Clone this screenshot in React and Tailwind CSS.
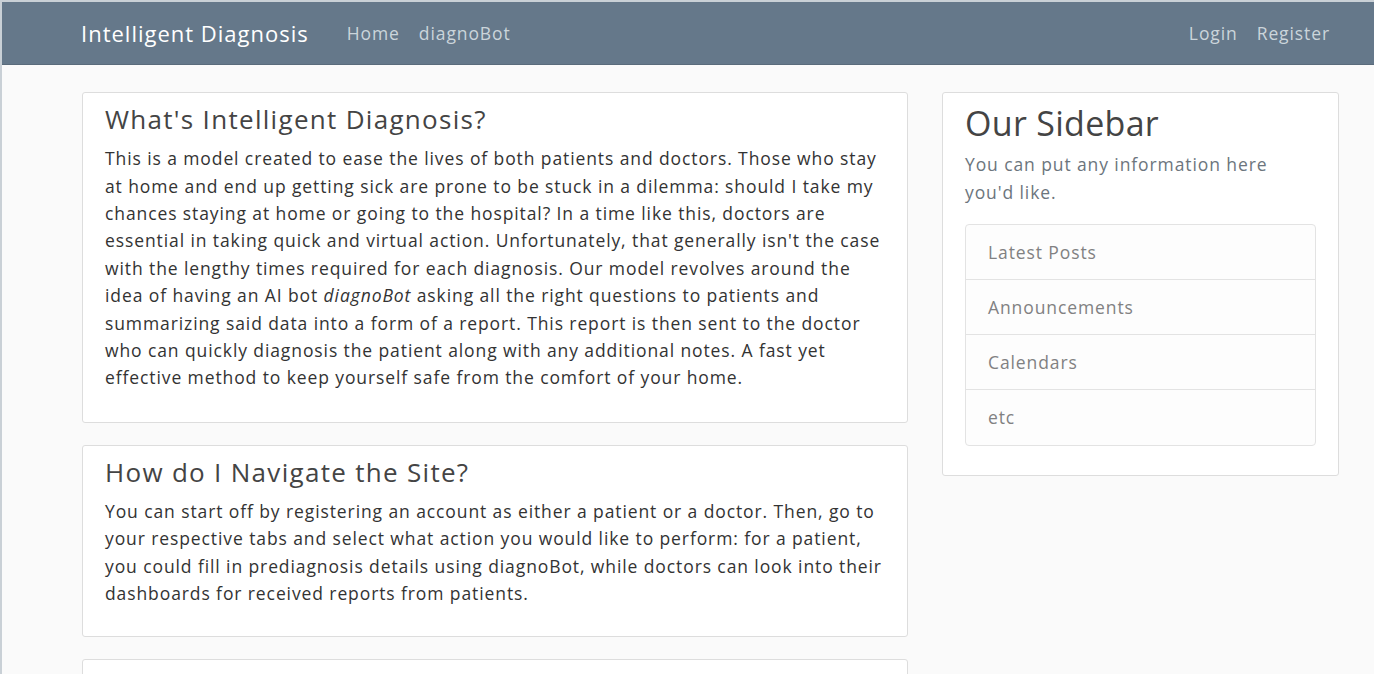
import React from "react";

const sidebarLinks = ["Latest Posts", "Announcements", "Calendars", "etc"];

const App = () => {
  return (
    <div
      className="min-h-screen bg-[#fafafa] text-[#333] border-t-2 border-l-2 border-[#c9d0d6]"
      style={{ fontFamily: '"Open Sans", "Liberation Sans", sans-serif' }}
    >
      {/* Navbar */}
      <header className="h-[63px] bg-[#65788a] border-b border-[#5a6b7b]">
        <nav className="flex items-center h-full pl-[79px] pr-[44px]">
          <a className="text-[22px] text-white mr-[38px] leading-none tracking-[1px]">Intelligent Diagnosis</a>
          <div className="flex gap-[19px] text-[17.5px] text-[#cbd5db] tracking-[0.9px]">
            <a>Home</a>
            <a>diagnoBot</a>
          </div>
          <div className="ml-auto flex gap-[19px] text-[17.5px] text-[#cbd5db] tracking-[0.9px]">
            <a>Login</a>
            <a>Register</a>
          </div>
        </nav>
      </header>

      <main className="flex gap-[34px] pl-[80px] pt-[27px]">
        {/* Left column */}
        <div className="w-[826px] flex flex-col gap-[22px]">
          <article className="bg-white border border-[#dddddd] rounded-[3px] px-[22px] pt-[11px] pb-[30px]">
            <h2 className="text-[26px] text-[#444] leading-[1.2] mb-[10px] tracking-[1.3px]">What's Intelligent Diagnosis?</h2>
            <p className="text-[17.5px] leading-[27.4px] tracking-[0.9px]">
              This is a model created to ease the lives of both patients and doctors. Those who stay<br />
              at home and end up getting sick are prone to be stuck in a dilemma: should I take my<br />
              chances staying at home or going to the hospital? In a time like this, doctors are<br />
              essential in taking quick and virtual action. Unfortunately, that generally isn't the case<br />
              with the lengthy times required for each diagnosis. Our model revolves around the<br />
              idea of having an AI bot <em>diagnoBot</em> asking all the right questions to patients and<br />
              summarizing said data into a form of a report. This report is then sent to the doctor<br />
              who can quickly diagnosis the patient along with any additional notes. A fast yet<br />
              effective method to keep yourself safe from the comfort of your home.
            </p>
          </article>

          <article className="bg-white border border-[#dddddd] rounded-[3px] px-[22px] pt-[11px] pb-[28px]">
            <h2 className="text-[26px] text-[#444] leading-[1.2] mb-[10px] tracking-[1.3px]">How do I Navigate the Site?</h2>
            <p className="text-[17.5px] leading-[27.4px] tracking-[0.9px]">
              You can start off by registering an account as either a patient or a doctor. Then, go to<br />
              your respective tabs and select what action you would like to perform: for a patient,<br />
              you could fill in prediagnosis details using diagnoBot, while doctors can look into their<br />
              dashboards for received reports from patients.
            </p>
          </article>

          <article className="bg-white border border-[#dddddd] rounded-[3px] h-[120px]" />
        </div>

        {/* Sidebar */}
        <aside className="w-[397px] self-start bg-white border border-[#dddddd] rounded-[3px] px-[22px] pt-[10px] pb-[29px]">
          <h3 className="text-[34px] text-[#444] leading-[1.2] mb-[6px] tracking-[0.3px]">Our Sidebar</h3>
          <p className="text-[17.5px] leading-[28px] text-[#6c757d] mb-[18px] tracking-[0.9px]">
            You can put any information here<br />you'd like.
          </p>
          <ul className="border border-[#e3e3e3] rounded-[4px] bg-[#fdfdfd]">
            {sidebarLinks.map((item, index) => (
              <li
                key={item}
                className={`h-[55px] flex items-center px-[22px] text-[17.5px] text-[#818182] tracking-[0.9px] ${
                  index !== sidebarLinks.length - 1 ? "border-b border-[#e3e3e3]" : ""
                }`}
              >
                {item}
              </li>
            ))}
          </ul>
        </aside>
      </main>
    </div>
  );
};

export default App;
